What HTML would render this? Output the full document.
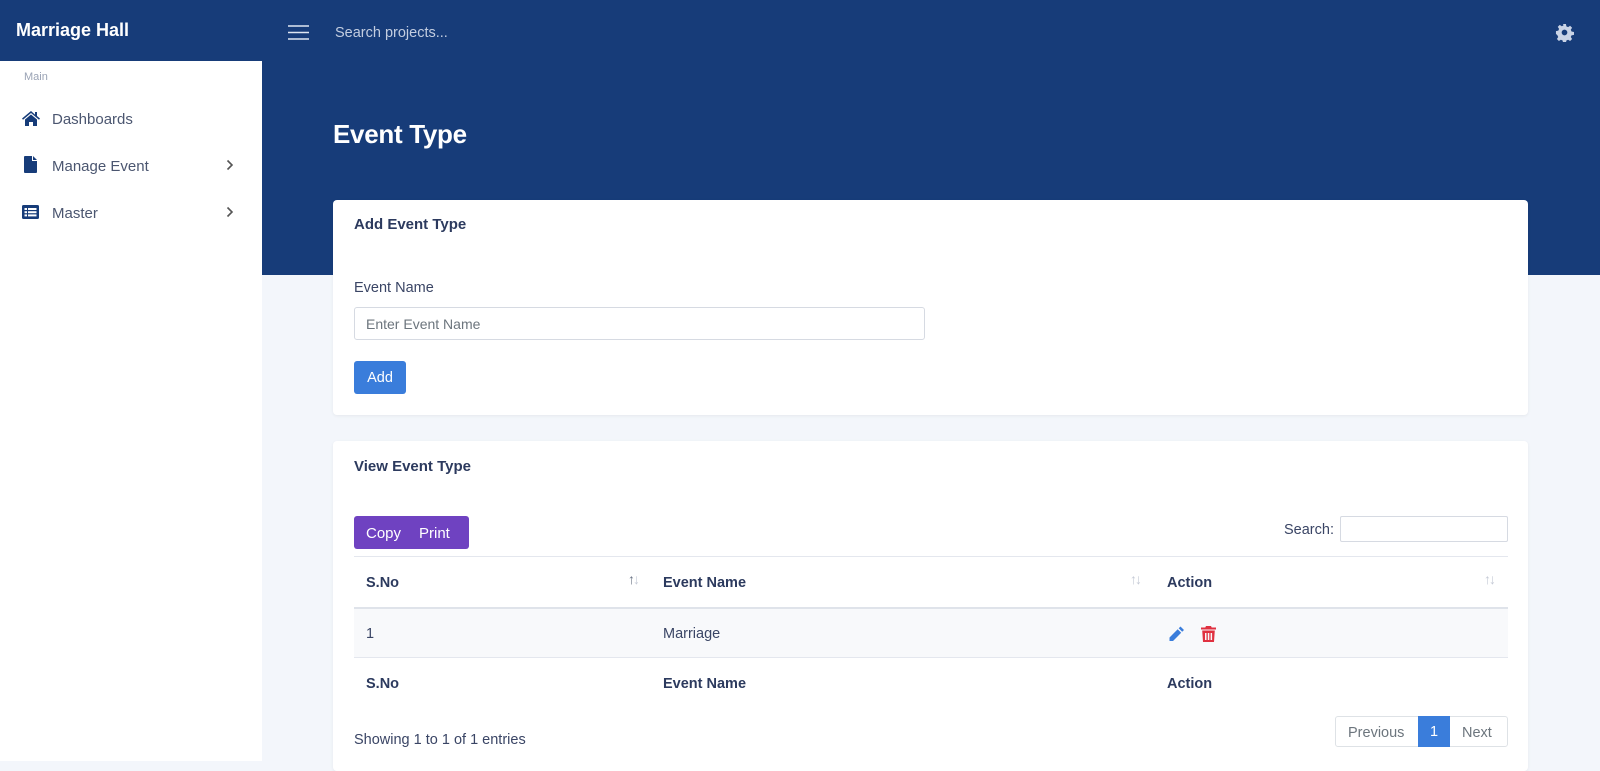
<!DOCTYPE html>
<html><head><meta charset="utf-8"><style>
*{box-sizing:border-box;margin:0;padding:0}
body{width:1600px;height:761px;overflow:hidden;background:#f3f6fb;font-family:"Liberation Sans",sans-serif;color:#2c3a5e;position:relative}
.abs{position:absolute}
.hdr{left:0;top:0;width:1600px;height:275px;background:#173c79}
.side{left:0;top:61px;width:262px;height:700px;background:#fff}
.brand{left:16px;top:20px;color:#fff;font-size:18px;font-weight:bold}
.nav{left:52px;font-size:15px;color:#4b5670}
.card{background:#fff;border-radius:4px;box-shadow:0 1px 3px rgba(0,0,0,.06)}
.th{font-size:14.5px;font-weight:bold;color:#2c3a5e}
.sort{font-size:14px;color:#c5cad6;letter-spacing:-2px}
</style></head><body>
<div class="abs hdr"></div>
<div class="abs side"></div>
<div class="abs brand">Marriage Hall</div>
<svg class="abs" style="left:288px;top:24px" width="21" height="17"><g stroke="#dfe6f2" stroke-width="1.6"><line x1="0" y1="2" x2="21" y2="2"/><line x1="0" y1="8.5" x2="21" y2="8.5"/><line x1="0" y1="15" x2="21" y2="15"/></g></svg>
<div class="abs" style="left:335px;top:25px;color:#c3cde0;font-size:14.5px">Search projects...</div>
<svg class="abs" style="left:1555px;top:23px" width="19" height="19" viewBox="0 0 20 20"><path fill="#c9d3e6" d="M8.5 1h3l.5 2.5 1.8.8 2.1-1.4 2.1 2.1-1.4 2.1.8 1.8 2.6.6v3l-2.6.5-.8 1.8 1.4 2.1-2.1 2.1-2.1-1.4-1.8.8-.5 2.6h-3l-.5-2.6-1.8-.8-2.1 1.4-2.1-2.1 1.4-2.1-.8-1.8L1 11.5v-3l2.5-.5.8-1.8-1.4-2.1 2.1-2.1 2.1 1.4 1.8-.8z"/><circle cx="10" cy="10" r="3" fill="#173c79"/></svg>
<div class="abs" style="left:24px;top:71px;font-size:11px;color:#9aa3b5">Main</div>
<svg class="abs" style="left:22px;top:111px" width="18" height="15" viewBox="0 0 18 15"><path fill="#173c79" d="M9 0L0 7.5l1 1.2L9 2l8 6.7 1-1.2-3-2.5V1h-2v2.6z M3 8.5L9 3.5l6 5V15h-4v-4H7v4H3z"/></svg>
<div class="abs nav" style="top:111px">Dashboards</div>
<svg class="abs" style="left:24px;top:156px" width="13" height="17" viewBox="0 0 13 17"><path fill="#173c79" d="M0 1a1 1 0 011-1h7v5h5v11a1 1 0 01-1 1H1a1 1 0 01-1-1zM9 0l4 4H9z"/></svg>
<div class="abs nav" style="top:158px">Manage Event</div>
<svg class="abs" style="left:226px;top:159px" width="8" height="12"><path d="M1.5 1.5l4.5 4.5-4.5 4.5" stroke="#555" stroke-width="1.6" fill="none"/></svg>
<svg class="abs" style="left:22px;top:205px" width="17" height="14" viewBox="0 0 17 14"><rect width="17" height="14" rx="1.5" fill="#173c79"/><g fill="#fff"><rect x="2.5" y="3" width="2.5" height="2"/><rect x="6" y="3" width="8.5" height="2"/><rect x="2.5" y="6.2" width="2.5" height="2"/><rect x="6" y="6.2" width="8.5" height="2"/><rect x="2.5" y="9.4" width="2.5" height="2"/><rect x="6" y="9.4" width="8.5" height="2"/></g></svg>
<div class="abs nav" style="top:205px">Master</div>
<svg class="abs" style="left:226px;top:206px" width="8" height="12"><path d="M1.5 1.5l4.5 4.5-4.5 4.5" stroke="#555" stroke-width="1.6" fill="none"/></svg>

<div class="abs" style="left:333px;top:119px;color:#fff;font-size:26px;font-weight:bold;letter-spacing:-0.3px">Event Type</div>

<div class="abs card" style="left:333px;top:200px;width:1195px;height:215px"></div>
<div class="abs" style="left:354px;top:216px;font-size:15px;font-weight:bold;color:#2c3a5e">Add Event Type</div>
<div class="abs" style="left:354px;top:280px;font-size:14.5px;color:#3a4565">Event Name</div>
<div class="abs" style="left:354px;top:307px;width:571px;height:33px;border:1px solid #d6dae2;border-radius:3px;padding:8px 11px;font-size:14px;color:#6c757d">Enter Event Name</div>
<div class="abs" style="left:354px;top:361px;width:52px;height:33px;background:#3a7ddb;border-radius:3px;color:#fff;font-size:14.5px;text-align:center;line-height:35px">Add</div>

<div class="abs card" style="left:333px;top:441px;width:1195px;height:330px"></div>
<div class="abs" style="left:354px;top:458px;font-size:15px;font-weight:bold;color:#2c3a5e">View Event Type</div>
<div class="abs" style="left:354px;top:516px;width:115px;height:33px;background:#6f42c1;border-radius:3px;color:#fff;font-size:15px;line-height:35px"><span style="position:absolute;left:12px">Copy</span><span style="position:absolute;left:65px">Print</span></div>
<div class="abs" style="left:1284px;top:522px;font-size:14.5px;color:#3a4565">Search:</div>
<div class="abs" style="left:1340px;top:516px;width:168px;height:26px;border:1px solid #d6dae2;border-radius:2px"></div>
<div class="abs" style="left:354px;top:556px;width:1154px;height:1px;background:#e4e7ee"></div>
<div class="abs th" style="left:366px;top:575px">S.No</div>
<div class="abs th" style="left:663px;top:575px">Event Name</div>
<div class="abs th" style="left:1167px;top:575px">Action</div>
<div class="abs sort" style="left:628px;top:571px;color:#6b7486">↑<span style="color:#c5cad6">↓</span></div>
<div class="abs sort" style="left:1130px;top:571px">↑↓</div>
<div class="abs sort" style="left:1484px;top:571px">↑↓</div>
<div class="abs" style="left:354px;top:607px;width:1154px;height:51px;background:#f8f9fb;border-top:2px solid #dfe3ea;border-bottom:1px solid #e4e7ee"></div>
<div class="abs" style="left:366px;top:626px;font-size:14.5px;color:#3a4565">1</div>
<div class="abs" style="left:663px;top:626px;font-size:14.5px;color:#3a4565">Marriage</div>
<svg class="abs" style="left:1168px;top:626px" width="17" height="16" viewBox="0 0 17 16"><path fill="#3a7ddb" d="M12.5.5l3.5 3.5-1.8 1.8-3.5-3.5zM9.7 3.3l3.5 3.5L5 15H1.5v-3.5z"/></svg>
<svg class="abs" style="left:1201px;top:626px" width="15" height="16" viewBox="0 0 15 16"><path fill="#e03140" d="M5 0h5l.7 1.5H15v2H0v-2h4.3zM1.2 4.5h12.6L13 16H2zM4 7v7h1.5V7zm2.8 0v7h1.5V7zm2.8 0v7h1.5V7z"/></svg>
<div class="abs th" style="left:366px;top:676px">S.No</div>
<div class="abs th" style="left:663px;top:676px">Event Name</div>
<div class="abs th" style="left:1167px;top:676px">Action</div>
<div class="abs" style="left:354px;top:732px;font-size:14.5px;color:#3a4565">Showing 1 to 1 of 1 entries</div>
<div class="abs" style="left:1335px;top:716px;width:173px;height:31px;border:1px solid #dee2e6;border-radius:3px;font-size:14.5px;color:#6c757d">
<span style="position:absolute;left:12px;top:8px">Previous</span>
<span style="position:absolute;left:82px;top:-1px;width:32px;height:31px;background:#3a7ddb;color:#fff;text-align:center;line-height:33px">1</span>
<span style="position:absolute;left:126px;top:8px">Next</span>
</div>
</body></html>
